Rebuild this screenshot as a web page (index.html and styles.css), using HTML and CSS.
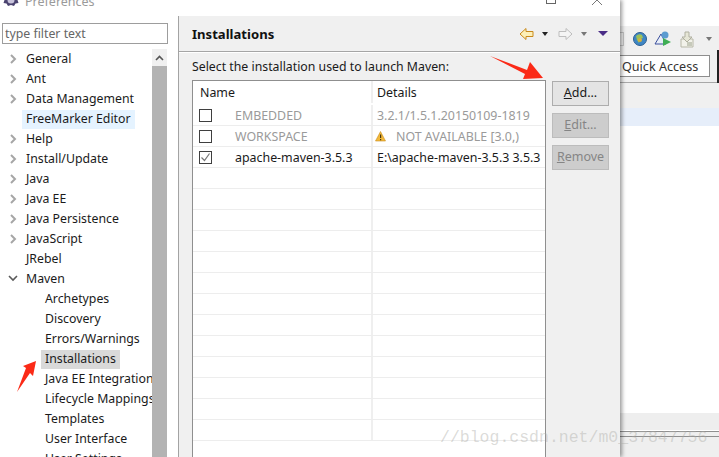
FILE: index.html
```html
<!DOCTYPE html>
<html lang="en">
<head>
<meta charset="utf-8">
<title>Preferences</title>
<link rel="stylesheet" href="styles.css">
</head>
<body>
<div class="page">
  <section class="dialog">
    <header class="titlebar">
      <svg class="app-icon" width="16" height="16" viewBox="0 0 16 16"><path d="M8 1l2 2 3-1 .5 3 2.500 1.500-1.500 2.500 1 3-3 .5L11 15l-3-1-3 1-1.500-2.500-3-.5 1-3L0 6.500 2.500 5 3 2l3 1z" fill="#4b4470"/><circle cx="8" cy="9" r="3.500" fill="#c9c4dc"/></svg>
      <span class="title-text">Preferences</span>
      <span class="win-max"></span>
      <svg class="win-close" width="12" height="8" viewBox="0 0 12 8"><path d="M1 7L6 2l5 5" fill="none" stroke="#777" stroke-width="1"/></svg>
    </header>
    <div class="dialog-body">
      <aside class="nav">
        <input class="filter" type="text" placeholder="type filter text">
        <div class="tree-wrap">
          <ul class="tree">
            <li class="node"><svg class="twisty" viewBox="0 0 22 20"><path d="M11 6l4 4-4 4" /></svg><span class="label">General</span></li>
            <li class="node"><svg class="twisty" viewBox="0 0 22 20"><path d="M11 6l4 4-4 4" /></svg><span class="label">Ant</span></li>
            <li class="node"><svg class="twisty" viewBox="0 0 22 20"><path d="M11 6l4 4-4 4" /></svg><span class="label">Data Management</span></li>
            <li class="node leaf"><span class="label hover">FreeMarker Editor</span></li>
            <li class="node"><svg class="twisty" viewBox="0 0 22 20"><path d="M11 6l4 4-4 4" /></svg><span class="label">Help</span></li>
            <li class="node"><svg class="twisty" viewBox="0 0 22 20"><path d="M11 6l4 4-4 4" /></svg><span class="label">Install/Update</span></li>
            <li class="node"><svg class="twisty" viewBox="0 0 22 20"><path d="M11 6l4 4-4 4" /></svg><span class="label">Java</span></li>
            <li class="node"><svg class="twisty" viewBox="0 0 22 20"><path d="M11 6l4 4-4 4" /></svg><span class="label">Java EE</span></li>
            <li class="node"><svg class="twisty" viewBox="0 0 22 20"><path d="M11 6l4 4-4 4" /></svg><span class="label">Java Persistence</span></li>
            <li class="node"><svg class="twisty" viewBox="0 0 22 20"><path d="M11 6l4 4-4 4" /></svg><span class="label">JavaScript</span></li>
            <li class="node leaf"><span class="label">JRebel</span></li>
            <li class="node"><svg class="twisty open" viewBox="0 0 22 20"><path d="M10 8l4 4 4-4" /></svg><span class="label">Maven</span></li>
            <li class="node child"><span class="label">Archetypes</span></li>
            <li class="node child"><span class="label">Discovery</span></li>
            <li class="node child"><span class="label">Errors/Warnings</span></li>
            <li class="node child"><span class="label selected">Installations</span></li>
            <li class="node child"><span class="label">Java EE Integration</span></li>
            <li class="node child"><span class="label">Lifecycle Mappings</span></li>
            <li class="node child"><span class="label">Templates</span></li>
            <li class="node child"><span class="label">User Interface</span></li>
            <li class="node child"><span class="label">User Settings</span></li>
          </ul>
          <div class="scrollbar">
            <div class="scroll-up"><svg width="9" height="6" viewBox="0 0 9 6"><path d="M1 5l3.500-3.500L8 5" fill="none" stroke="#555" stroke-width="1.600"/></svg></div>
            <div class="scroll-thumb"></div>
          </div>
        </div>
      </aside>
      <main class="panel">
        <div class="panel-head">
          <h1 class="panel-title">Installations</h1>
          <div class="panel-tools">
            <svg class="tool" width="15" height="14" viewBox="0 0 15 14"><path d="M1 7l6-5.500V4.500h7v5H7v3z" fill="#fdf0b8" stroke="#c98a1c"/></svg>
            <span class="tri tri-dark"></span>
            <svg class="tool tool-fwd" width="15" height="14" viewBox="0 0 15 14"><path d="M14 7L8 1.500V4.500H1v5h7v3z" fill="#f4f4f4" stroke="#bdbdbd"/></svg>
            <span class="tri tri-gray"></span>
            <span class="tri tri-purple"></span>
          </div>
        </div>
        <div class="panel-content">
          <p class="intro">Select the installation used to launch Maven:</p>
          <div class="content-row">
            <div class="table">
              <div class="row head"><div class="cell name-cell">Name</div><div class="cell detail-cell">Details</div></div>
              <div class="row"><div class="cell name-cell"><span class="check"></span><span class="muted">EMBEDDED</span></div><div class="cell detail-cell"><span class="muted">3.2.1/1.5.1.20150109-1819</span></div></div>
              <div class="row"><div class="cell name-cell"><span class="check"></span><span class="muted">WORKSPACE</span></div><div class="cell detail-cell warn-cell"><svg class="warn" width="11" height="11" viewBox="0 0 11 11"><path d="M5.500 .5L10.500 10H.5z" fill="#f2b83a" stroke="#c98f1f" stroke-width=".6"/><path d="M5 3.500h1.200v3.500H5zM5 8h1.200v1.200H5z" fill="#4a3a10"/></svg><span class="muted">NOT AVAILABLE [3.0,)</span></div></div>
              <div class="row"><div class="cell name-cell"><span class="check"><svg width="11" height="11" viewBox="0 0 11 11"><path d="M1.500 5.500l3 3 5-7" fill="none" stroke="#777" stroke-width="1.200"/></svg></span><span>apache-maven-3.5.3</span></div><div class="cell detail-cell">E:\apache-maven-3.5.3 3.5.3</div></div>
              <div class="row"><div class="cell name-cell"></div><div class="cell detail-cell"></div></div>
              <div class="row"><div class="cell name-cell"></div><div class="cell detail-cell"></div></div>
              <div class="row"><div class="cell name-cell"></div><div class="cell detail-cell"></div></div>
              <div class="row"><div class="cell name-cell"></div><div class="cell detail-cell"></div></div>
              <div class="row"><div class="cell name-cell"></div><div class="cell detail-cell"></div></div>
              <div class="row"><div class="cell name-cell"></div><div class="cell detail-cell"></div></div>
              <div class="row"><div class="cell name-cell"></div><div class="cell detail-cell"></div></div>
              <div class="row"><div class="cell name-cell"></div><div class="cell detail-cell"></div></div>
              <div class="row"><div class="cell name-cell"></div><div class="cell detail-cell"></div></div>
              <div class="row"><div class="cell name-cell"></div><div class="cell detail-cell"></div></div>
              <div class="row"><div class="cell name-cell"></div><div class="cell detail-cell"></div></div>
              <div class="row"><div class="cell name-cell"></div><div class="cell detail-cell"></div></div>
              <div class="row"><div class="cell name-cell"></div><div class="cell detail-cell"></div></div>
            </div>
            <div class="buttons">
              <button class="btn" type="button"><u>A</u>dd...</button>
              <button class="btn disabled" type="button"><u>E</u>dit...</button>
              <button class="btn disabled" type="button"><u>R</u>emove</button>
            </div>
          </div>
        </div>
      </main>
    </div>
  </section>
  <section class="desktop">
    <div class="top-white"></div>
    <div class="ide-toolbar">
      <div class="tool-icons">
        <span class="stub"></span>
        <svg width="16" height="16" viewBox="0 0 16 16"><circle cx="8" cy="8" r="6.500" fill="#3f86c4" stroke="#2b5f92"/><path d="M4 5q3-3 6-1l1 3-3 1-1 4-2-3z" fill="#9cc25a"/><circle cx="8" cy="9" r="2" fill="#d9b23a"/></svg>
        <svg width="18" height="16" viewBox="0 0 18 16"><path d="M1 13L7 3l5 10z" fill="#e8eef8" stroke="#3b4f9c"/><circle cx="11" cy="4" r="3.500" fill="#5b9bd0"/><path d="M9 7l8 4-8 4z" fill="#3fae55"/></svg>
        <svg width="16" height="17" viewBox="0 0 16 17"><path d="M3 8h12v8H3z" fill="#f2f2ea" stroke="#b8b8a8"/><path d="M7 1h4v5h3l-5 5-5-5h3z" fill="#e6e6d6" stroke="#b0b0a0"/><path d="M9 12h5M9 14h5" stroke="#9aa08a"/></svg>
        <span class="tri tri-gray tri-end"></span>
      </div>
      <div class="quick-row">
        <div class="quick">Quick Access</div>
        <span class="perspective"></span>
      </div>
    </div>
    <div class="editor-strip"></div>
    <div class="editor">
      <div class="editor-hl"></div>
    </div>
    <div class="bottom-strip"></div>
    <div class="bottom-lines"></div>
  </section>
</div>
<svg class="arrow arrow-add" width="60" height="30" viewBox="0 0 60 30"><path d="M1 1L38 15 41 7 54 23 34 24 36 19z" fill="#fb2a17"/></svg>
<svg class="arrow arrow-inst" width="24" height="36" viewBox="0 0 24 36"><path d="M21 1L8 6l3 2L2 32 15 13l3 3z" fill="#fb2a17"/></svg>
<div class="watermark">//blog.csdn.net/m0_37847756</div>
</body>
</html>
```
FILE: styles.css
```css
* { box-sizing: border-box; }
html, body { margin: 0; padding: 0; height: 457px; overflow: hidden; background: #fff; }
body { font-family: "Noto Sans", "Open Sans", sans-serif; font-size: 12.500px; color: #1a1a1a; }

.page { display: flex; width: 719px; height: 457px; overflow: hidden; }

.dialog { position: relative; z-index: 1; width: 620px; height: 457px; display: flex; flex-direction: column; background: #fff; box-shadow: 2px 0 4px rgba(0,0,0,.4); flex: none; }
.titlebar { height: 16px; flex: none; display: flex; align-items: flex-end; padding-left: 3px; overflow: hidden; position: relative; }
.app-icon { flex: none; margin-bottom: 9px; margin-top: -9px; }
.title-text { margin-left: 6px; font-size: 12.500px; color: #9a9a9a; line-height: 16px; margin-bottom: 6px; }
.win-max { position: absolute; left: 546px; top: -6px; width: 10px; height: 10px; border: 1px solid #666; }
.win-close { position: absolute; left: 591px; top: -2px; }

.dialog-body { flex: 1; display: flex; min-height: 0; }
.nav { width: 179px; flex: none; display: flex; flex-direction: column; border-right: 1px solid #a3a3a3; padding-top: 7px; min-height: 0; }
.filter { display: block; width: 166px; height: 21px; margin-left: 2px; border: 1px solid #9d9d9d; padding: 0 2px; font: inherit; font-size: 12.300px; background: #fff; flex: none; }
.filter::placeholder { color: #666; opacity: 1; }
.tree-wrap { display: flex; margin-top: 5px; flex: 1; min-height: 0; }
.tree { list-style: none; margin: 0; padding: 0; width: 152px; overflow: hidden; flex: none; font-size: 12.300px; }
.node { display: flex; align-items: center; height: 20px; white-space: nowrap; }
.twisty { width: 22px; height: 20px; flex: none; }
.twisty path { fill: none; stroke: #a6a6a6; stroke-width: 2; }
.twisty.open path { stroke: #595959; stroke-width: 1.600; transform: translateX(-1px) translateY(-1px); }
.node.leaf { padding-left: 22px; }
.node.child { padding-left: 41px; }
.label { padding: 0 4px; height: 19px; line-height: 18px; }
.hover { background: #e5f3ff; }
.selected { background: #d9d9d9; }
.scrollbar { width: 15px; flex: none; display: flex; flex-direction: column; background: #f0f0f0; }
.scroll-up { height: 17px; display: flex; align-items: center; justify-content: center; flex: none; }
.scroll-thumb { flex: 1; background: #b3b3b3; }

.panel { flex: 1; background: #f0f0f0; display: flex; flex-direction: column; min-width: 0; }
.panel-head { height: 36px; flex: none; display: flex; justify-content: space-between; align-items: center; padding: 0 12px 0 13px; border-bottom: 1px solid #a5a5a5; }
.panel-title { margin: 0; font-size: 13.100px; font-weight: 700; color: #111; }
.panel-tools { display: flex; align-items: center; }
.tool { display: block; }
.tool-fwd { margin-left: 10px; }
.tri { display: block; width: 0; height: 0; border-style: solid; border-color: transparent; border-width: 4px 3.500px 0; margin-left: 8px; }
.tri-dark { border-top-color: #222; }
.tri-gray { border-top-color: #777; }
.tri-purple { border-width: 5px 5px 0; border-top-color: #4a2d86; margin-left: 11px; }

.panel-content { flex: 1; display: flex; flex-direction: column; padding: 5px 0 0 13px; border-top: 1px solid #fff; min-height: 0; }
.intro { margin: 0; height: 22px; line-height: 17px; font-size: 12.300px; }
.content-row { display: flex; gap: 6px; flex: 1; min-height: 0; }
.table { width: 354px; flex: none; background: #fff; border: 1px solid #8f8f8f; border-bottom: 0; overflow: hidden; font-size: 12.400px; }
.row { display: flex; height: 21px; border-bottom: 1px solid #ededed; }
.row.head { height: 24px; border-bottom: 0; padding-bottom: 2px; }
.cell { display: flex; align-items: center; white-space: nowrap; overflow: hidden; min-width: 0; }
.name-cell { width: 180px; flex: none; padding-left: 6px; border-right: 2px solid #efefef; }
.head .name-cell { padding-left: 7px; }
.detail-cell { flex: 1; padding-left: 4px; }
.warn-cell { padding-left: 2px; }
.warn { flex: none; margin-right: 10px; }
.muted { color: #9a9a9a; }
.check { width: 13px; height: 13px; border: 1px solid #3f3f3f; background: #fff; margin-right: 23px; flex: none; display: flex; align-items: center; justify-content: center; }
.buttons { display: flex; flex-direction: column; gap: 7px; padding-top: 1px; }
.btn { width: 57px; height: 25px; border: 1px solid #adadad; background: #e4e4e4; font: inherit; color: #1a1a1a; padding: 0 0 2px; }
.btn.disabled { background: #cdcdcd; border-color: #bcbcbc; color: #858585; }

.desktop { flex: 1; min-width: 0; display: flex; flex-direction: column; background: #fff; }
.top-white { height: 26px; flex: none; background: #fff; }
.ide-toolbar { height: 57px; flex: none; background: #f0f0f0; border-bottom: 1px solid #a8a8a8; display: flex; flex-direction: column; }
.tool-icons { display: flex; align-items: center; gap: 6px; height: 26px; flex: none; margin-bottom: 3px; }
.stub { width: 4px; height: 14px; border: 1px solid #c5c5c5; border-left: 0; margin-right: 2px; }
.tri-end { margin-left: 6px; }
.quick-row { display: flex; align-items: flex-start; }
.quick { width: 90px; height: 22px; background: #fff; border: 1px solid #8e8e8e; border-left: 0; padding-left: 2px; font-size: 12.600px; line-height: 21px; color: #333; }
.perspective { width: 2px; height: 33px; margin-left: 7px; margin-top: -5px; background: #222; }
.editor-strip { height: 25px; flex: none; background: #f0f0f0; }
.editor { height: 305px; flex: none; background: #fff; }
.editor-hl { height: 18px; background: #e6eefa; }
.bottom-strip { height: 17px; flex: none; background: #eee; }
.bottom-lines { flex: 1; margin-top: 1px; background: #efefef; border-top: 1px solid #8f8f8f; position: relative; }
.bottom-lines::after { content: ""; display: block; height: 1px; margin-top: 4px; background: #8f8f8f; }

.arrow { position: absolute; z-index: 3; display: block; }
.arrow-add { left: 489px; top: 55px; }
.arrow-inst { left: 15px; top: 360px; }
.watermark { position: absolute; z-index: 4; left: 440px; top: 427px; font-family: "Liberation Mono", monospace; font-size: 16.500px; line-height: 22px; color: rgba(170,170,165,.42); white-space: nowrap; }
```
